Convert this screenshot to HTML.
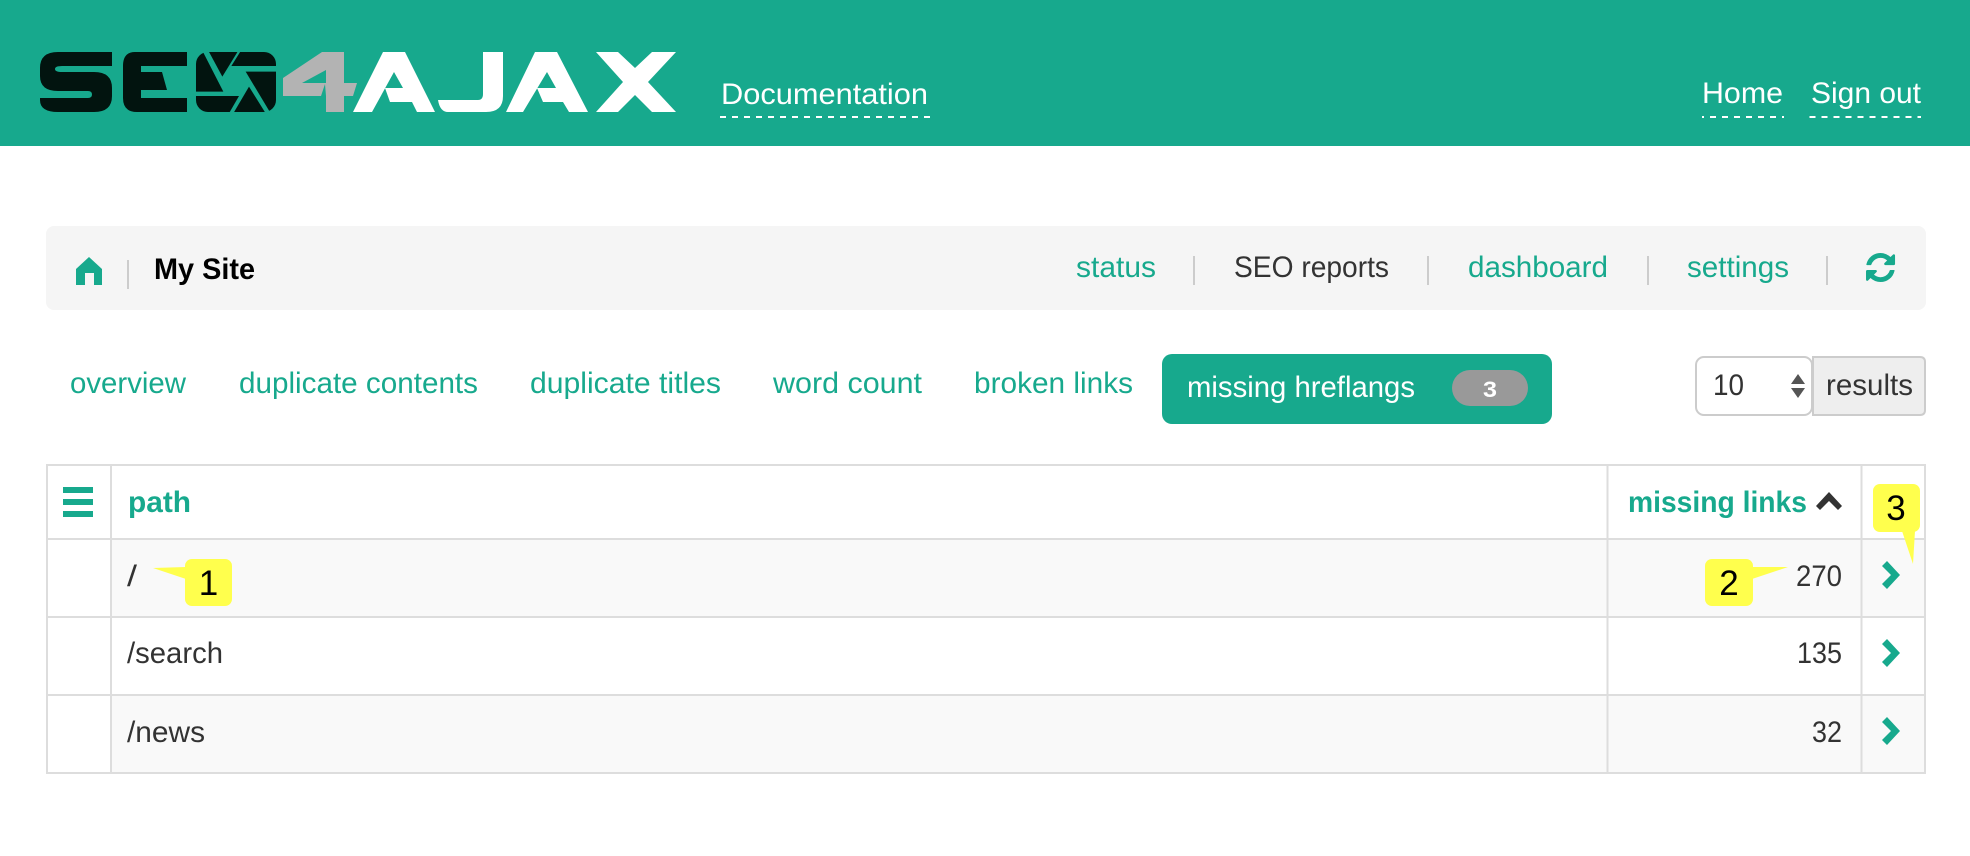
<!DOCTYPE html>
<html lang="en"><head><meta charset="utf-8"><title>SEO4AJAX</title>
<style>
html,body{margin:0;padding:0;background:#fff;width:1970px;height:856px;overflow:hidden}
svg{display:block}
text{font-family:"Liberation Sans",Arial,sans-serif;font-size:30px}
.t{fill:#17a98d}.w{fill:#fff}.d{fill:#333}.b{font-weight:700}
.c{font-size:35px;fill:#000;text-anchor:middle}
</style></head><body>
<svg width="1970" height="856" viewBox="0 0 1970 856" xmlns="http://www.w3.org/2000/svg">
<defs><clipPath id="o"><rect x="6" y="6" width="240" height="180" rx="36"/></clipPath></defs>
<rect width="1970" height="856" fill="#fff"/>
<!-- header -->
<rect width="1970" height="146" fill="#17a98d"/>
<g fill="#02140f">
<path d="M112 52H58Q40 52 40 68V76Q40 91 58 91H88Q92 91 92 94.500Q92 98 88 98H40V100Q40 112 58 112H94Q112 112 112 96V88Q112 72 94 72H62Q55 72 55 69Q55 66 62 66H112Z"/>
<path d="M187 52H135Q123 52 123 66V98Q123 112 137 112H187V98H141V90H167L162 72H141V66H187Z"/>
<g transform="translate(194 50) scale(.33333)" clip-path="url(#o)">
<path d="M0 0H24L88 125H0Z"/>
<path d="M42 0H134L85 80Z"/>
<path d="M142 0H250V48H112Z"/>
<path d="M155 65H250V190H230Z"/>
<path d="M165 110L215 190H118Z"/>
<path d="M0 138H135L105 190H0Z"/>
</g>
</g>
<path fill="#b3b3b3" fill-rule="evenodd" d="M283 78L322 52H344V83H357L353 96H344V112H326V96H283ZM302 83H326V70ZM325 84L326 96H321Z"/>
<g fill="#fff">
<path d="M353 112L383 52H405L435 112H417L412 102H390L385 88H403L394 72L372 112Z"/>
<path d="M438 100H478Q483 100 483 94V52H503V96Q503 112 486 112H448Q440 112 438 100Z"/>
<path d="M506 112L535 52H557L588 112H569L563 102H543L537 88H556L547 72L523 112Z"/>
<path d="M596 52H618L635 68L652 52H676L648 82L676 112H652L635 95L618 112H596L623 82Z"/>
</g>
<text class="w" x="721" y="104" textLength="207" lengthAdjust="spacingAndGlyphs">Documentation</text>
<text class="w" x="1702" y="103" textLength="81" lengthAdjust="spacingAndGlyphs">Home</text>
<text class="w" x="1811" y="103" textLength="110" lengthAdjust="spacingAndGlyphs">Sign out</text>
<g stroke="#fff" stroke-width="2" stroke-dasharray="6 6" fill="none">
<path d="M720 117H930"/>
<path d="M1702 117H1784" stroke-dashoffset="4"/>
<path d="M1809.500 117H1921"/>
</g>
<!-- site nav -->
<rect x="46" y="226" width="1880" height="84" rx="8" fill="#f5f5f5"/>
<path fill="#17a98d" d="M89 257L102 269V285H94V273H85V285H76V269Z"/>
<rect x="127" y="260" width="2" height="29" fill="#ccc"/>
<text class="b" x="154" y="279" fill="#000" textLength="101" lengthAdjust="spacingAndGlyphs">My Site</text>
<text class="t" x="1076" y="277" textLength="80" lengthAdjust="spacingAndGlyphs">status</text>
<text class="d" x="1234" y="277" textLength="155" lengthAdjust="spacingAndGlyphs">SEO reports</text>
<text class="t" x="1468" y="277" textLength="140" lengthAdjust="spacingAndGlyphs">dashboard</text>
<text class="t" x="1687" y="277" textLength="102" lengthAdjust="spacingAndGlyphs">settings</text>
<g fill="#ccc"><rect x="1193" y="256" width="2" height="29"/><rect x="1427" y="256" width="2" height="29"/><rect x="1647" y="256" width="2" height="29"/><rect x="1826" y="256" width="2" height="29"/></g>
<path transform="translate(1863.600 250.600) scale(.0189)" fill="#17a98d" d="M1639 1056q0 5-1 7-64 268-268 434.500t-478 166.500q-146 0-282.500-55t-243.500-157l-129 129q-19 19-45 19t-45-19-19-45v-448q0-26 19-45t45-19h448q26 0 45 19t19 45-19 45l-137 137q71 66 161 102t187 36q134 0 250-65t186-179q11-17 53-117 8-23 30-23h192q13 0 22.500 9.500t9.500 22.500zm25-800v448q0 26-19 45t-45 19h-448q-26 0-45-19t-19-45 19-45l138-138q-148-137-349-137-134 0-250 65t-186 179q-11 17-53 117-8 23-30 23h-199q-13 0-22.500-9.500t-9.500-22.500v-7q65-268 270-434.500t480-166.500q146 0 284 55.500t245 156.500l130-129q19-19 45-19t45 19 19 45z"/>
<!-- tabs -->
<text class="t" x="70" y="393" textLength="116" lengthAdjust="spacingAndGlyphs">overview</text>
<text class="t" x="239" y="393" textLength="239" lengthAdjust="spacingAndGlyphs">duplicate contents</text>
<text class="t" x="530" y="393" textLength="191" lengthAdjust="spacingAndGlyphs">duplicate titles</text>
<text class="t" x="773" y="393" textLength="149" lengthAdjust="spacingAndGlyphs">word count</text>
<text class="t" x="974" y="393" textLength="159" lengthAdjust="spacingAndGlyphs">broken links</text>
<rect x="1162" y="354" width="390" height="70" rx="10" fill="#17a98d"/>
<text class="w" x="1187" y="397" textLength="228" lengthAdjust="spacingAndGlyphs">missing hreflangs</text>
<rect x="1452" y="370" width="76" height="36" rx="18" fill="#999"/>
<text class="w b" x="1483" y="397" style="font-size:22px" textLength="14" lengthAdjust="spacingAndGlyphs">3</text>
<!-- results select -->
<path d="M1813 357H1920Q1925 357 1925 362V410Q1925 415 1920 415H1813Z" fill="#eee" stroke="#ccc" stroke-width="2"/>
<rect x="1696" y="357" width="116" height="58" rx="8" fill="#fff" stroke="#ccc" stroke-width="2"/>
<text class="d" x="1713" y="395" textLength="31" lengthAdjust="spacingAndGlyphs">10</text>
<path fill="#555" d="M1798 374L1805 384H1791ZM1791 388H1805L1798 398Z"/>
<text class="d" x="1826" y="395" textLength="87" lengthAdjust="spacingAndGlyphs">results</text>
<!-- table -->
<rect x="112" y="540" width="1812" height="76" fill="#f9f9f9"/>
<rect x="112" y="696" width="1812" height="76" fill="#f9f9f9"/>
<g fill="#ddd">
<rect x="46" y="464" width="1880" height="2"/><rect x="46" y="538" width="1880" height="2"/><rect x="46" y="616" width="1880" height="2"/><rect x="46" y="694" width="1880" height="2"/><rect x="46" y="772" width="1880" height="2"/>
<rect x="46" y="464" width="2" height="310"/><rect x="110" y="464" width="2" height="310"/><rect x="1606.500" y="464" width="2" height="310"/><rect x="1860.500" y="464" width="2" height="310"/><rect x="1924" y="464" width="2" height="310"/>
</g>
<g fill="#17a98d"><rect x="63" y="487" width="30" height="6"/><rect x="63" y="499" width="30" height="6"/><rect x="63" y="511" width="30" height="6"/></g>
<text class="t b" x="128" y="512" textLength="63" lengthAdjust="spacingAndGlyphs">path</text>
<text class="t b" x="1628" y="512" textLength="179" lengthAdjust="spacingAndGlyphs">missing links</text>
<path fill="#333" d="M1816 506L1829 492L1842 506L1838 510L1829 501L1820 510Z"/>
<text class="d" x="127" y="586" textLength="10" lengthAdjust="spacingAndGlyphs">/</text>
<text class="d" x="127" y="663" textLength="96" lengthAdjust="spacingAndGlyphs">/search</text>
<text class="d" x="127" y="742" textLength="78" lengthAdjust="spacingAndGlyphs">/news</text>
<text class="d" x="1796" y="586" textLength="46" lengthAdjust="spacingAndGlyphs">270</text>
<text class="d" x="1797" y="663" textLength="45" lengthAdjust="spacingAndGlyphs">135</text>
<text class="d" x="1812" y="742" textLength="30" lengthAdjust="spacingAndGlyphs">32</text>
<g fill="#17a98d">
<path d="M1882 566L1887 561L1900 575L1887 589L1882 584L1891 575Z"/>
<path d="M1882 644L1887 639L1900 653L1887 667L1882 662L1891 653Z"/>
<path d="M1882 722L1887 717L1900 731L1887 745L1882 740L1891 731Z"/>
</g>
<!-- callouts -->
<g fill="#ffff4d">
<rect x="185" y="559" width="47" height="47" rx="7"/><path d="M153 568L186 567V579Z"/>
<rect x="1705" y="559" width="48" height="47" rx="7"/><path d="M1788 567L1752 567V579Z"/>
<rect x="1873" y="484" width="47" height="48" rx="7"/><path d="M1902 531H1915L1913 564Z"/>
</g>
<text class="c" x="208.500" y="595">1</text>
<text class="c" x="1729" y="595">2</text>
<text class="c" x="1896" y="520">3</text>
</svg>
</body></html>
